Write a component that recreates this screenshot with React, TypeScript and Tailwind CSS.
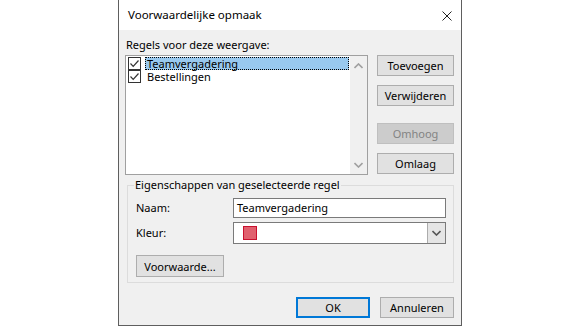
import React from "react";

const Check = () => (
  <div className="w-[13px] h-[13px] border border-[#333333] bg-white flex items-center justify-center">
    <svg width="11" height="11" viewBox="0 0 11 11">
      <path d="M1.5 5.5 L4.2 8.3 L9.5 2.5" fill="none" stroke="#333333" strokeWidth="1.2" />
    </svg>
  </div>
);

const Chevron = ({ up = false, color = "#a0a0a0" }: { up?: boolean; color?: string }) => (
  <svg width="9" height="6" viewBox="0 0 9 6">
    <path
      d={up ? "M0.5 5 L4.5 1 L8.5 5" : "M0.5 1 L4.5 5 L8.5 1"}
      fill="none"
      stroke={color}
      strokeWidth="1.6"
    />
  </svg>
);

const Button = ({
  label,
  className = "",
  disabled = false,
}: {
  label: string;
  className?: string;
  disabled?: boolean;
}) => (
  <div
    className={`h-[21px] flex items-center justify-center border leading-none ${
      disabled
        ? "bg-[#cccccc] border-[#bfbfbf] text-[#838383]"
        : "bg-[#e1e1e1] border-[#adadad] text-black"
    } ${className}`}
  >
    {label}
  </div>
);

export default function App() {
  return (
    <div className="w-[580px] h-[326px] bg-white text-[11px] text-black font-['Noto_Sans',sans-serif]">
      <div className="ml-[118px] w-[344px] h-[326px] border-x border-b border-[#5e5e5e] flex flex-col">
        {/* title bar */}
        <div className="h-[30px] bg-white flex items-center justify-between pl-[9px] pr-[9px]">
          <span className="leading-none text-[11.5px]">Voorwaardelijke opmaak</span>
          <svg width="10" height="10" viewBox="0 0 10 10" className="mt-[2px]">
            <path d="M0.5 0.5 L9.5 9.5 M9.5 0.5 L0.5 9.5" stroke="#222222" strokeWidth="1" />
          </svg>
        </div>

        {/* body */}
        <div className="flex-1 bg-[#f0f0f0] pl-[6px] pr-[7px] pt-[7px] flex flex-col">
          <div className="h-[16px] leading-[16px] ml-[1px] mb-[2px]">Regels voor deze weergave:</div>

          <div className="flex gap-[9px]">
            {/* list */}
            <div className="w-[243px] h-[120px] border border-[#a0a0a0] bg-white flex">
              <div className="flex-1 pt-[1px] pr-[1px]">
                <div className="h-[13px] flex items-center">
                  <div className="ml-[2px] mr-[4px]">
                    <Check />
                  </div>
                  <div className="flex-1 h-[13px] bg-[#99c9ef] border border-dotted border-black leading-[11px] pl-[1px]">
                    Teamvergadering
                  </div>
                </div>
                <div className="h-[13px] flex items-center">
                  <div className="ml-[2px] mr-[4px]">
                    <Check />
                  </div>
                  <div className="flex-1 h-[13px] leading-[13px] pl-[2px]">Bestellingen</div>
                </div>
              </div>
              <div className="w-[17px] bg-[#f0f0f0] flex flex-col items-center justify-between pt-[7px] pb-[6px]">
                <Chevron up />
                <Chevron />
              </div>
            </div>

            {/* buttons */}
            <div className="w-[77px] flex flex-col">
              <Button label="Toevoegen" />
              <Button label="Verwijderen" className="mt-[9px]" />
              <Button label="Omhoog" className="mt-[17px]" disabled />
              <Button label="Omlaag" className="mt-[9px]" />
            </div>
          </div>

          {/* group box */}
          <div className="relative mt-[10px] ml-[2px] h-[98px] border border-[#dcdcdc] pl-[8px] pr-[7px] pt-[12px]">
            <span className="absolute left-[6px] -top-[9px] px-[1px] bg-[#f0f0f0] leading-[16px]">
              Eigenschappen van geselecteerde regel
            </span>
            <div className="flex items-center h-[20px]">
              <div className="w-[97px]">Naam:</div>
              <div className="flex-1 h-[20px] border border-[#7a7a7a] bg-white pl-[3px] leading-[18px]">
                Teamvergadering
              </div>
            </div>
            <div className="flex items-center h-[22px] mt-[4px]">
              <div className="w-[97px]">Kleur:</div>
              <div className="flex-1 h-[22px] border border-[#7a7a7a] bg-white flex items-center">
                <div className="ml-[9px] w-[14px] h-[14px] bg-[#e0606e] border border-[#c8102e]" />
                <div className="ml-auto w-[18px] h-[20px] bg-[#e5e5e5] border-l border-[#acacac] flex items-center justify-center">
                  <Chevron color="#555555" />
                </div>
              </div>
            </div>
            <Button label="Voorwaarde..." className="mt-[11px] w-[88px] h-[22px]" />
          </div>

          {/* footer */}
          <div className="flex justify-end gap-[10px] mt-[14px]">
            <div className="w-[74px] h-[21px] flex items-center justify-center border-2 border-[#0078d7] bg-[#e1e1e1] leading-none">
              OK
            </div>
            <Button label="Annuleren" className="w-[74px]" />
          </div>
        </div>
      </div>
    </div>
  );
}
